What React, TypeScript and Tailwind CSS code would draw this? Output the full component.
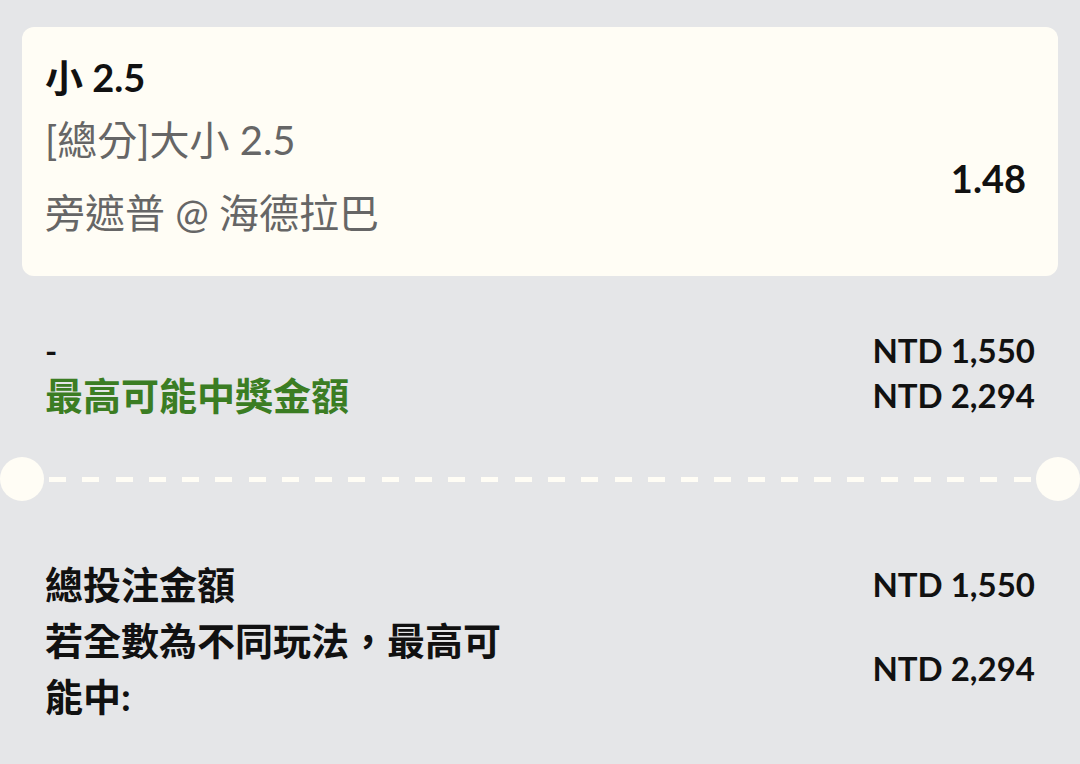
import React from 'react';

const font = { fontFamily: "Lato, 'Noto Sans CJK TC', sans-serif" };

const Dashes: React.FC = () => (
  <div className="flex h-[44px] items-center">
    <div className="h-[44px] w-[44px] shrink-0 rounded-full bg-[#fffdf5]" />
    <div className="mx-[5px] flex flex-1 items-center justify-between">
      {Array.from({ length: 30 }).map((_, i) => (
        <div key={i} className="h-[5px] w-[17px] bg-[#fffdf5]" />
      ))}
    </div>
    <div className="h-[44px] w-[44px] shrink-0 rounded-full bg-[#fffdf5]" />
  </div>
);

const App: React.FC = () => {
  return (
    <div className="min-h-[764px] w-[1080px] bg-[#e5e6e8] pt-[27px]" style={font}>
      {/* selection card */}
      <div className="mx-[22px] flex h-[249px] items-center justify-between rounded-xl bg-[#fffdf5] pl-[23px] pr-[32px]">
        <div className="flex flex-col self-start pt-[25px]">
          <div className="text-[38px] font-bold leading-[50px] text-[#111]">小 2.5</div>
          <div className="mt-[13px] text-[40px] leading-[50px] text-[#666]">[總分]大小 2.5</div>
          <div className="mt-[23px] text-[40px] leading-[50px] text-[#666]">旁遮普 @ 海德拉巴</div>
        </div>
        <div className="pt-[54px] text-[38px] font-bold text-[#111]">1.48</div>
      </div>

      {/* stake / potential win */}
      <div className="mt-[52px] flex justify-between px-[45px]">
        <div className="flex flex-col">
          <div className="text-[33px] font-bold leading-[45px] text-[#111]">-</div>
          <div className="text-[38px] font-bold leading-[45px] text-[#3b7d23]">最高可能中獎金額</div>
        </div>
        <div className="flex flex-col items-end text-[33px] font-bold leading-[45px] text-[#111]">
          <div>NTD 1,550</div>
          <div>NTD 2,294</div>
        </div>
      </div>

      <div className="mt-[39px]">
        <Dashes />
      </div>

      {/* totals */}
      <div className="mt-[55px] flex flex-col px-[45px] text-[#111]">
        <div className="flex items-center justify-between">
          <div className="text-[38px] font-bold leading-[56px]">總投注金額</div>
          <div className="text-[33px] font-bold leading-[56px]">NTD 1,550</div>
        </div>
        <div className="flex items-center justify-between">
          <div className="w-[470px] text-[38px] font-bold leading-[56px]">若全數為不同玩法，最高可能中:</div>
          <div className="text-[33px] font-bold leading-[56px]">NTD 2,294</div>
        </div>
      </div>
    </div>
  );
};

export default App;
